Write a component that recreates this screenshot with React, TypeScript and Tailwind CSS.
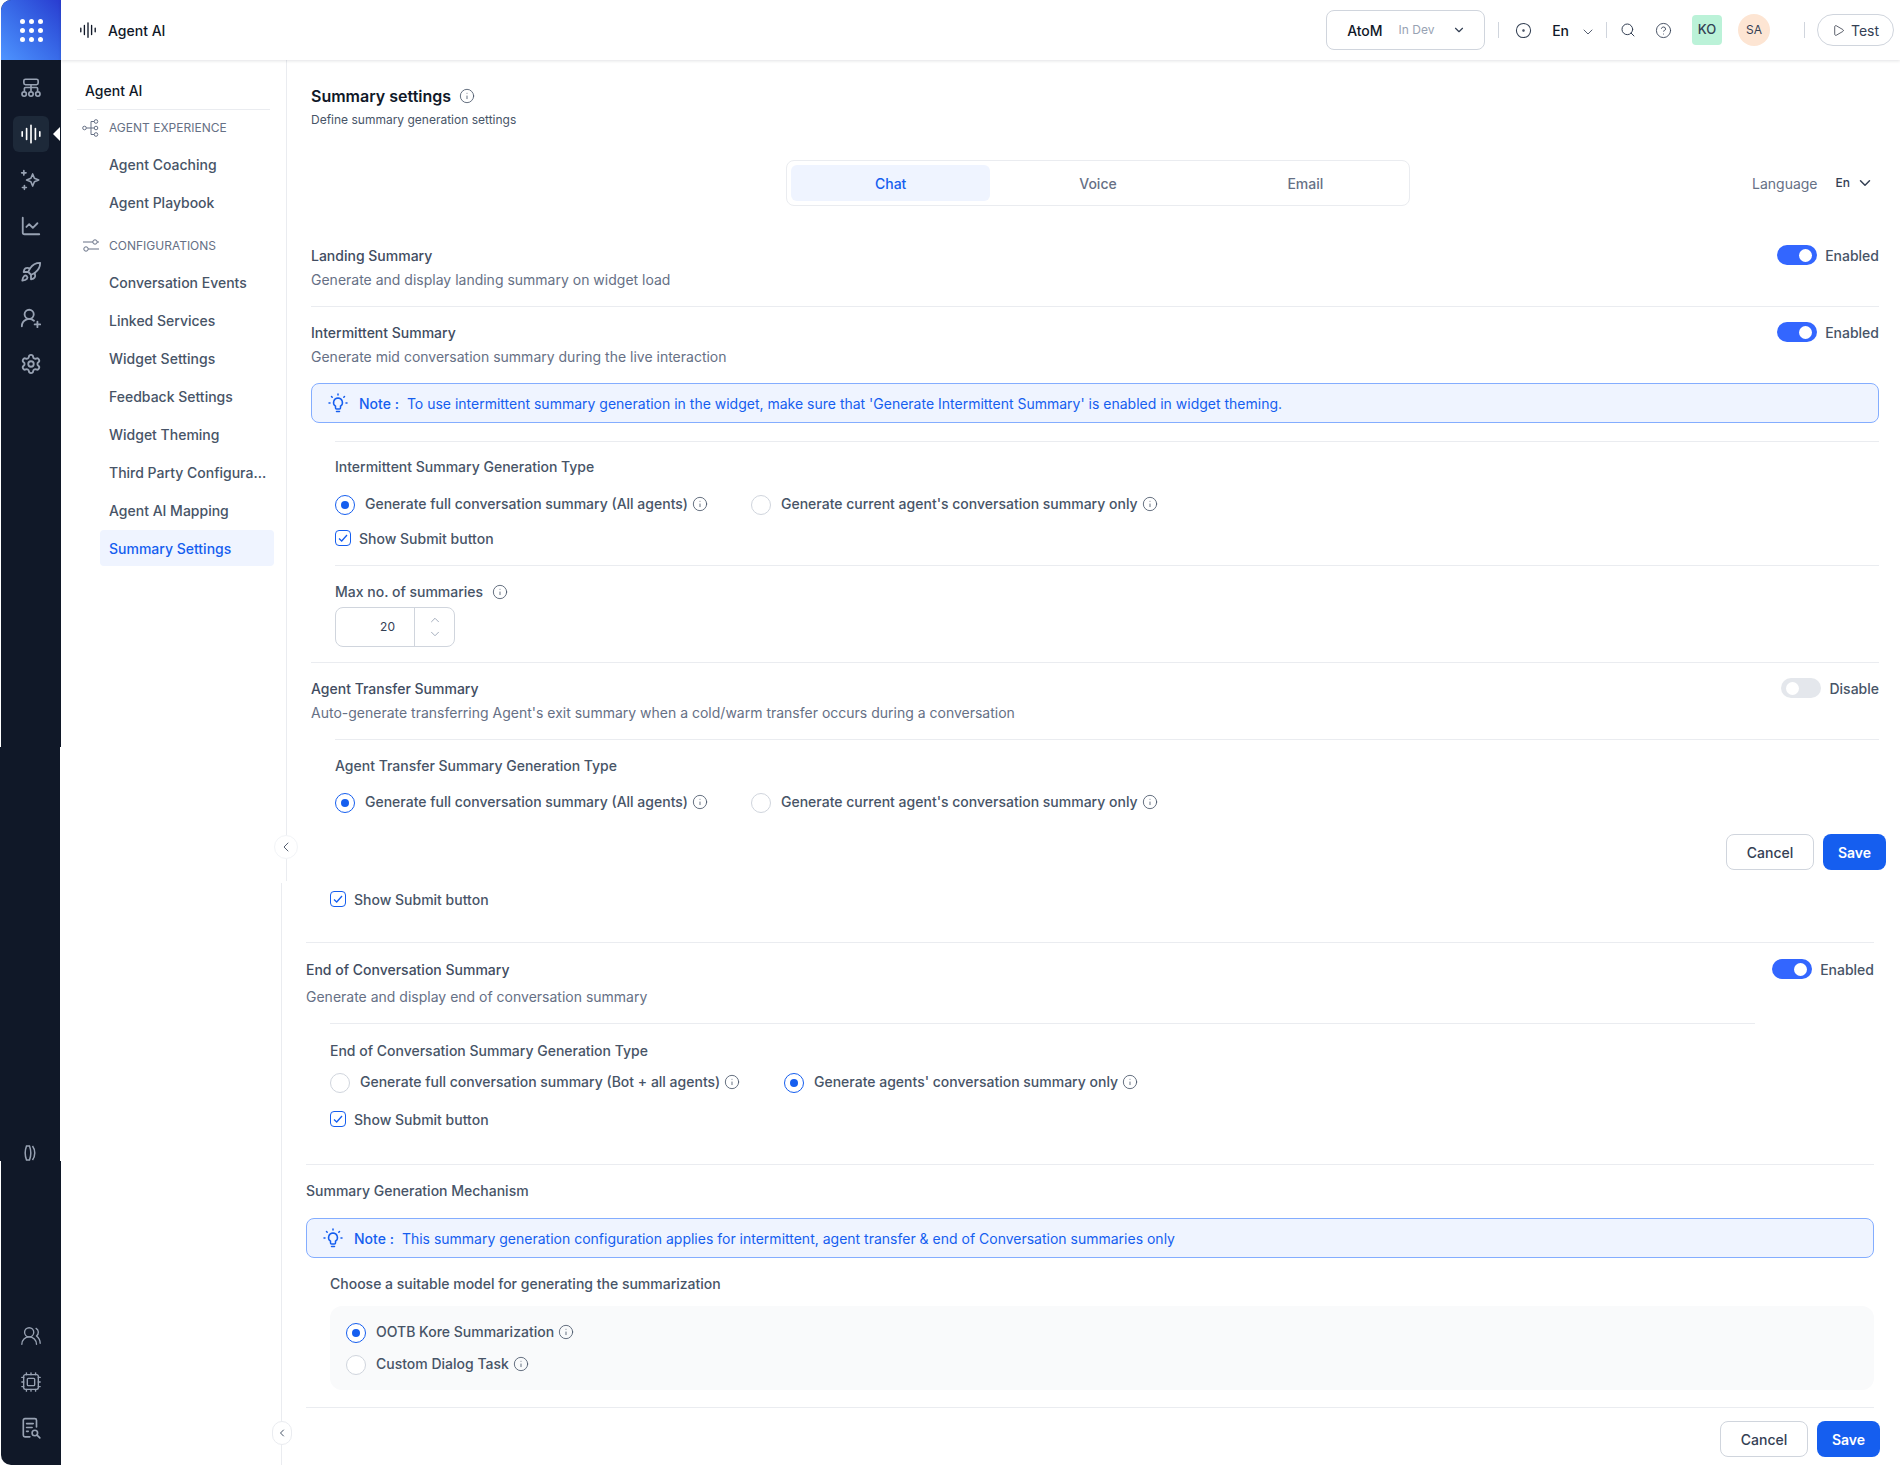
import { ChartLine, ChevronDown, ChevronLeft, ChevronUp, CircleDot, CircleHelp, Cpu, Info, Play, Rocket, Search, Settings, UserRoundPlus, UsersRound } from 'lucide-react';
import React from 'react';

const Wave = ({ className }: { className?: string }) => (
  <svg viewBox="0 0 20 20" fill="none" stroke="currentColor" strokeWidth="1.5" strokeLinecap="round" className={className}>
    <path d="M2 8v4M6 5v10M10 2v16M14 5v10M18 8v4" />
  </svg>
);

const OrgTree = ({ className }: { className?: string }) => (
  <svg viewBox="0 0 20 20" fill="none" stroke="currentColor" strokeWidth="1.5" className={className}>
    <rect x="3.5" y="2" width="13" height="5" rx="1.5" />
    <path d="M10 7v6M4 13v-2.5a1 1 0 0 1 1-1h10a1 1 0 0 1 1 1V13" />
    <circle cx="3.8" cy="15.5" r="2" />
    <circle cx="10" cy="15.5" r="2" />
    <circle cx="16.2" cy="15.5" r="2" />
  </svg>
);

const Sparkle = ({ className }: { className?: string }) => (
  <svg viewBox="0 0 20 20" fill="none" stroke="currentColor" strokeWidth="1.5" strokeLinejoin="round" strokeLinecap="round" className={className}>
    <path d="M11.5 4.5l1.6 3.9 3.9 1.6-3.9 1.6-1.6 3.9-1.6-3.9L6 10l3.9-1.6z" />
    <path d="M3.5 1.5v4M1.5 3.5h4M4 15v3.5M2.2 16.8h3.6" />
  </svg>
);

const Doors = ({ className }: { className?: string }) => (
  <svg viewBox="0 0 12 16" fill="none" stroke="currentColor" strokeWidth="1.5" className={className}>
    <path d="M2.5 1h3c1.500 4 1.500 10 0 14h-3c-1.500-4-1.500-10 0-14z" />
    <path d="M8.500 1c3 4 3 10 0 14" />
  </svg>
);

const DocSearch = ({ className }: { className?: string }) => (
  <svg viewBox="0 0 20 20" fill="none" stroke="currentColor" strokeWidth="1.5" strokeLinecap="round" className={className}>
    <path d="M9 18H4.5A1.5 1.5 0 0 1 3 16.500V3a1.500 1.500 0 0 1 1.500-1.500h9A1.500 1.500 0 0 1 15 3v6" />
    <path d="M6 6h6M6 9.500h5M6 13h1.500" />
    <circle cx="13.500" cy="14.500" r="2.500" />
    <path d="M15.500 16.500L18 19" />
  </svg>
);

const Branch = ({ className }: { className?: string }) => (
  <svg viewBox="0 0 18 18" fill="none" stroke="currentColor" strokeWidth="1" className={className}>
    <circle cx="2.500" cy="9" r="1.800" />
    <circle cx="14" cy="2.500" r="1.800" />
    <circle cx="14" cy="9" r="1.800" />
    <circle cx="14" cy="15.500" r="1.800" />
    <path d="M4.300 9h7.900M9 2.500h3.200M9 15.500h3.200M9 2.500v13" />
  </svg>
);

const Sliders = ({ className }: { className?: string }) => (
  <svg viewBox="0 0 18 18" fill="none" stroke="currentColor" strokeWidth="1" className={className}>
    <circle cx="13" cy="5" r="2.200" />
    <circle cx="4" cy="12" r="2.200" />
    <path d="M1 5h9.800M15.200 5H17M6.200 12H17" />
  </svg>
);

const Bulb = ({ className }: { className?: string }) => (
  <svg viewBox="0 0 20 20" fill="none" stroke="currentColor" strokeWidth="1.500" strokeLinecap="round" className={className}>
    <path d="M10 5a4.500 4.500 0 0 0-2.500 8.200V15a1 1 0 0 0 1 1h3a1 1 0 0 0 1-1v-1.800A4.500 4.500 0 0 0 10 5z" />
    <path d="M8.500 18.500h3M10 1v1M3.500 3.500l.7.7M16.500 3.500l-.7.7M1 10h1M18 10h1" />
  </svg>
);

const InfoDot = ({ className = 'ml-1' }: { className?: string }) => <Info size={16} strokeWidth={1.25} className={`shrink-0 text-[#475467] ${className}`} />;

const railTop = [
  { icon: OrgTree },
  { icon: Wave, active: true },
  { icon: Sparkle },
  { icon: ChartLine },
  { icon: Rocket },
  { icon: UserRoundPlus },
  { icon: Settings },
];

// the rail in the capture has two seams, each part is 1px off from the next
const Rail = () => (
  <aside className="flex w-[61px] shrink-0 flex-col text-[#98a2b3]">
    <div className="ml-px flex h-[747px] w-[60px] flex-col items-center rounded-tl-[10px] bg-[#101828]">
      <div className="flex h-[60px] w-full items-center justify-center rounded-tl-[10px] bg-gradient-to-tr from-[#4f94ff] to-[#2a3bd0]">
        <div className="grid grid-cols-3 gap-[4px]">
          {Array.from({ length: 9 }).map((_, i) => (
            <span key={i} className="h-[5px] w-[5px] rounded-full bg-white" />
          ))}
        </div>
      </div>
      <div className="mt-[10px] flex flex-col items-center gap-[10px]">
        {railTop.map(({ icon: Icon, active }, i) => (
          <div key={i} className={`relative flex h-9 w-9 items-center justify-center rounded-md ${active ? 'bg-[#1d2939] text-white' : ''}`}>
            <Icon className="h-[22px] w-[22px]" />
            {active && <span className="absolute left-[40px] top-[11px] h-0 w-0 border-y-[7px] border-r-[7px] border-y-transparent border-r-white" />}
          </div>
        ))}
      </div>
    </div>
    <div className="flex h-[414px] w-[60px] flex-col items-center bg-[#101828] pt-[398px]">
      <Doors className="h-4 w-3" />
    </div>
    <div className="ml-px flex w-[60px] flex-1 flex-col items-center gap-[10px] rounded-bl-[10px] bg-[#101828] pt-[157px]">
      <div className="flex h-9 w-9 items-center justify-center"><UsersRound size={22} strokeWidth={1.5} /></div>
      <div className="flex h-9 w-9 items-center justify-center"><Cpu size={22} strokeWidth={1.5} /></div>
      <div className="flex h-9 w-9 items-center justify-center"><DocSearch className="h-[22px] w-[22px]" /></div>
    </div>
  </aside>
);

const Header = () => (
  <header className="relative z-10 flex h-[60px] shrink-0 items-center bg-white pl-[18px] shadow-[0_1px_3px_rgba(16,24,40,0.12)]">
    <Wave className="h-[18px] w-[18px] text-[#101828]" />
    <span className="ml-[11px] text-[14px] font-medium text-[#101828]">Agent AI</span>
    <div className="ml-auto flex h-10 w-[159px] items-center rounded-lg border border-[#d0d5dd] pl-5">
      <span className="text-[14px] font-medium text-[#101828]">AtoM</span>
      <span className="ml-4 text-[12px] text-[#98a2b3]">In Dev</span>
      <ChevronDown size={14} className="ml-[18px] text-[#344054]" />
    </div>
    <span className="ml-[13px] h-4 w-px bg-[#d0d5dd]" />
    <CircleDot size={17} strokeWidth={1.5} className="ml-4 text-[#344054]" />
    <span className="ml-[20px] text-[14px] font-medium text-[#101828]">En</span>
    <ChevronDown size={16} strokeWidth={1.25} className="ml-[11px] mt-1 text-[#344054]" />
    <span className="ml-[10px] h-4 w-px bg-[#d0d5dd]" />
    <Search size={16} strokeWidth={1.5} className="ml-[13px] text-[#344054]" />
    <CircleHelp size={17} strokeWidth={1.25} className="ml-[19px] text-[#344054]" />
    <span className="ml-5 flex h-[30px] w-[30px] items-center justify-center rounded bg-[#bbf2d8] text-[13px] font-medium text-[#344054]">KO</span>
    <span className="ml-4 flex h-8 w-8 items-center justify-center rounded-full bg-[#fde5d3] text-[12px] text-[#344054]">SA</span>
    <span className="ml-[34px] h-4 w-px bg-[#d0d5dd]" />
    <button className="ml-[12px] mr-[6px] flex h-8 w-[77px] items-center justify-center gap-[6px] rounded-full border border-[#d0d5dd] text-[14px] text-[#344054]">
      <Play size={13} strokeWidth={1.25} className="text-[#101828]" />
      Test
    </button>
  </header>
);

const NavItem = ({ label, active }: { label: string; active?: boolean }) => (
  <div className={`flex h-[38px] items-center text-[14px] font-medium ${active ? 'text-[#155eef]' : 'text-[#475467]'}`}>
    <span className={`ml-[40px] flex h-9 w-[174px] items-center rounded-sm pl-[9px] ${active ? 'bg-[#eff4ff]' : ''}`}>{label}</span>
  </div>
);

const NavGroup = ({ icon: Icon, label }: { icon: React.ComponentType<{ className?: string }>; label: string }) => (
  <div className="flex h-5 items-center pl-[22px] text-[12px] uppercase text-[#667085]">
    <Icon className="h-[18px] w-[18px]" />
    <span className="ml-[9px]">{label}</span>
  </div>
);

const SideNav = () => (
  <nav className="relative -ml-px flex w-[227px] shrink-0 flex-col">
    <div className="h-[821px] w-[227px] border-r border-[#eaecf0] pt-[21px]">
      <div className="ml-[25px] h-5 text-[14px] font-medium leading-5 text-[#101828]">Agent AI</div>
      <div className="ml-[17px] mt-2 h-px w-[193px] bg-[#eaecf0]" />
      <div className="mt-2"><NavGroup icon={Branch} label="Agent Experience" /></div>
      <div className="mt-[7px]">
        <NavItem label="Agent Coaching" />
        <NavItem label="Agent Playbook" />
      </div>
      <div className="mt-[15px]"><NavGroup icon={Sliders} label="Configurations" /></div>
      <div className="mt-[7px]">
        <NavItem label="Conversation Events" />
        <NavItem label="Linked Services" />
        <NavItem label="Widget Settings" />
        <NavItem label="Feedback Settings" />
        <NavItem label="Widget Theming" />
        <NavItem label="Third Party Configura..." />
        <NavItem label="Agent AI Mapping" />
        <NavItem label="Summary Settings" active />
      </div>
    </div>
    <div className="mt-[2px] w-[222px] flex-1 border-r border-[#eaecf0]" />
    <span className="absolute left-[214px] top-[775px] flex h-6 w-6 items-center justify-center rounded-full border border-[#f2f4f7] bg-white"><ChevronLeft size={16} strokeWidth={1.25} className="text-[#344054]" /></span>
    <span className="absolute left-[212px] top-[1361px] flex h-6 w-5 items-center justify-center rounded-full border border-[#eaecf0] bg-white"><ChevronLeft size={12} className="text-[#475467]" /></span>
  </nav>
);

const Toggle = ({ on, label }: { on: boolean; label: string }) => (
  <div className="flex items-center gap-2">
    <span className={`flex h-5 w-10 items-center rounded-full px-[3px] ${on ? 'justify-end bg-[#3366ff]' : 'justify-start bg-[#e4e7ec]'}`}>
      <span className="mx-[2px] h-[13px] w-[13px] rounded-full bg-white" />
    </span>
    <span className="text-[14px] font-medium text-[#475467]">{label}</span>
  </div>
);

const Row = ({ title, desc, on, label, descGap = 'mt-[5px]' }: { title: string; desc: string; on: boolean; label: string; descGap?: string }) => (
  <div>
    <div className="flex h-5 items-center justify-between">
      <span className="text-[14px] font-medium text-[#414c61]">{title}</span>
      <Toggle on={on} label={label} />
    </div>
    <p className={`${descGap} h-5 text-[14px] leading-5 text-[#667085]`}>{desc}</p>
  </div>
);

const Note = ({ text }: { text: string }) => (
  <div className="flex h-10 items-center rounded-lg border border-[#84adff] bg-[#eff4ff] pl-4 text-[14px] text-[#155eef]">
    <Bulb className="h-5 w-5 shrink-0" />
    <span className="ml-[11px] font-medium">Note :</span>
    <span className="ml-2">{text}</span>
  </div>
);

const Hr = ({ className = '' }: { className?: string }) => <div className={`h-px bg-[#eaecf0] ${className}`} />;

const Radio = ({ checked, label, className = '' }: { checked?: boolean; label: string; className?: string }) => (
  <div className={`flex h-5 items-center ${className}`}>
    <span className={`flex h-5 w-5 shrink-0 items-center justify-center rounded-full border bg-white ${checked ? 'border-[#155eef]' : 'border-[#d0d5dd]'}`}>
      {checked && <span className="h-2 w-2 rounded-full bg-[#155eef]" />}
    </span>
    <span className="flex items-center pb-[3px]">
      <span className="ml-[10px] text-[14px] font-medium text-[#475467]">{label}</span>
      <InfoDot />
    </span>
  </div>
);

const Check = ({ label }: { label: string }) => (
  <div className="flex h-4 items-center">
    <span className="flex h-4 w-4 items-center justify-center rounded-[4px] border border-[#155eef]">
      <svg viewBox="0 0 12 12" fill="none" stroke="#155eef" strokeWidth="1.3" className="h-3 w-3"><path d="M2 6.500l2.700 2.500L10 3" /></svg>
    </span>
    <span className="ml-2 text-[14px] font-medium text-[#475467]">{label}</span>
  </div>
);

const Label = ({ children, className = '' }: { children: React.ReactNode; className?: string }) => (
  <div className={`h-5 text-[14px] font-medium leading-5 text-[#475467] ${className}`}>{children}</div>
);

const Actions = ({ className = '' }: { className?: string }) => (
  <div className={`flex gap-[9px] ${className}`}>
    <button className="h-9 w-[88px] rounded-lg border border-[#d0d5dd] bg-white text-[14px] font-medium text-[#344054]">Cancel</button>
    <button className="h-9 w-[63px] rounded-lg bg-[#155eef] text-[14px] font-semibold text-white">Save</button>
  </div>
);

const App = () => (
  <div className="flex h-[1465px] w-[1900px] overflow-hidden bg-white font-['Inter',sans-serif]">
    <Rail />
    <div className="flex min-w-0 flex-1 flex-col">
      <Header />
      <div className="flex flex-1">
        <SideNav />
        <main className="relative flex-1 pl-6 pr-[21px]">
          <div className="pt-6">
            <div className="flex h-6 items-center">
              <h1 className="text-[16px] font-semibold text-[#101828]">Summary settings</h1>
              <Info size={16} strokeWidth={1.25} className="ml-2 text-[#475467]" />
            </div>
            <p className="mt-1 h-4 text-[12px] leading-4 text-[#475467]">Define summary generation settings</p>

            <div className="mt-8 flex h-[46px] items-center">
              <div className="ml-[475px] flex h-[46px] w-[624px] items-center rounded-lg border border-[#eaecf0] px-[4px] text-[14px] font-medium text-[#667085]">
                <span className="flex h-9 w-[200px] items-center justify-center rounded-md bg-[#eff4ff] text-[#155eef]">Chat</span>
                <span className="ml-[8px] flex w-[200px] justify-center">Voice</span>
                <span className="ml-[8px] flex w-[200px] justify-center">Email</span>
              </div>
              <span className="ml-auto text-[14px] text-[#667085]">Language</span>
              <span className="ml-[18px] text-[12px] font-medium text-[#344054]">En</span>
              <ChevronDown size={18} className="ml-[6px] mr-[5px] text-[#344054]" />
            </div>

            <div className="mt-[39px]"><Row title="Landing Summary" desc="Generate and display landing summary on widget load" on label="Enabled" /></div>
            <Hr className="mt-4" />

            <div className="mt-[15px]"><Row title="Intermittent Summary" desc="Generate mid conversation summary during the live interaction" on label="Enabled" /></div>
            <div className="mt-4"><Note text="To use intermittent summary generation in the widget, make sure that 'Generate Intermittent Summary' is enabled in widget theming." /></div>
            <div className="pl-6">
              <Hr className="mt-[18px]" />
              <Label className="mt-[15px]">Intermittent Summary Generation Type</Label>
              <div className="mt-[18px] flex">
                <Radio checked label="Generate full conversation summary (All agents)" className="w-[416px]" />
                <Radio label="Generate current agent's conversation summary only" />
              </div>
              <div className="mt-[15px]"><Check label="Show Submit button" /></div>
              <Hr className="mt-[19px]" />
              <Label className="mt-4 flex items-center">Max no. of summaries<InfoDot className="ml-[9px]" /></Label>
              <div className="mt-[5px] flex h-10 w-[120px] rounded-lg border border-[#d0d5dd]">
                <span className="flex w-[79px] items-center justify-end border-r border-[#d0d5dd] pr-[19px] text-[12px] text-[#344054]">20</span>
                <span className="flex flex-1 flex-col items-center justify-center text-[#98a2b3]">
                  <ChevronUp size={14} strokeWidth={1.5} />
                  <ChevronDown size={14} strokeWidth={1.5} />
                </span>
              </div>
            </div>
            <Hr className="mt-[15px]" />

            <div className="mt-[15px]"><Row title="Agent Transfer Summary" desc="Auto-generate transferring Agent's exit summary when a cold/warm transfer occurs during a conversation" on={false} label="Disable" /></div>
            <div className="pl-6">
              <Hr className="mt-4" />
              <Label className="mt-4">Agent Transfer Summary Generation Type</Label>
              <div className="mt-[17px] flex">
                <Radio checked label="Generate full conversation summary (All agents)" className="w-[416px]" />
                <Radio label="Generate current agent's conversation summary only" />
              </div>
            </div>
            <Actions className="absolute left-[1439px] top-[774px]" />
          </div>

          <div className="-ml-[5px] mr-[5px]">
            <div className="mt-[78px] pl-6"><Check label="Show Submit button" /></div>
            <Hr className="mt-[35px]" />
            <div className="mt-4"><Row title="End of Conversation Summary" desc="Generate and display end of conversation summary" on label="Enabled" descGap="mt-2" /></div>
            <div className="pl-6">
              <Hr className="mt-4 mr-[119px]" />
              <Label className="mt-[17px]">End of Conversation Summary Generation Type</Label>
              <div className="mt-3 flex">
                <Radio label="Generate full conversation summary (Bot + all agents)" className="w-[454px]" />
                <Radio checked label="Generate agents' conversation summary only" />
              </div>
              <div className="mt-[18px]"><Check label="Show Submit button" /></div>
            </div>
            <Hr className="mt-[37px]" />
            <Label className="mt-4">Summary Generation Mechanism</Label>
            <div className="mt-[17px]"><Note text="This summary generation configuration applies for intermittent, agent transfer & end of Conversation summaries only" /></div>
            <div className="pl-6">
              <Label className="mt-4">Choose a suitable model for generating the summarization</Label>
              <div className="mt-3 flex h-[84px] flex-col gap-3 rounded-xl bg-[#f9fafb] pl-4 pt-[17px]">
                <Radio checked label="OOTB Kore Summarization" />
                <Radio label="Custom Dialog Task" />
              </div>
            </div>
            <Hr className="mt-[17px]" />
            <Actions className="mt-[13px] -mr-[6px] justify-end" />
          </div>
        </main>
      </div>
    </div>
  </div>
);

export default App;
